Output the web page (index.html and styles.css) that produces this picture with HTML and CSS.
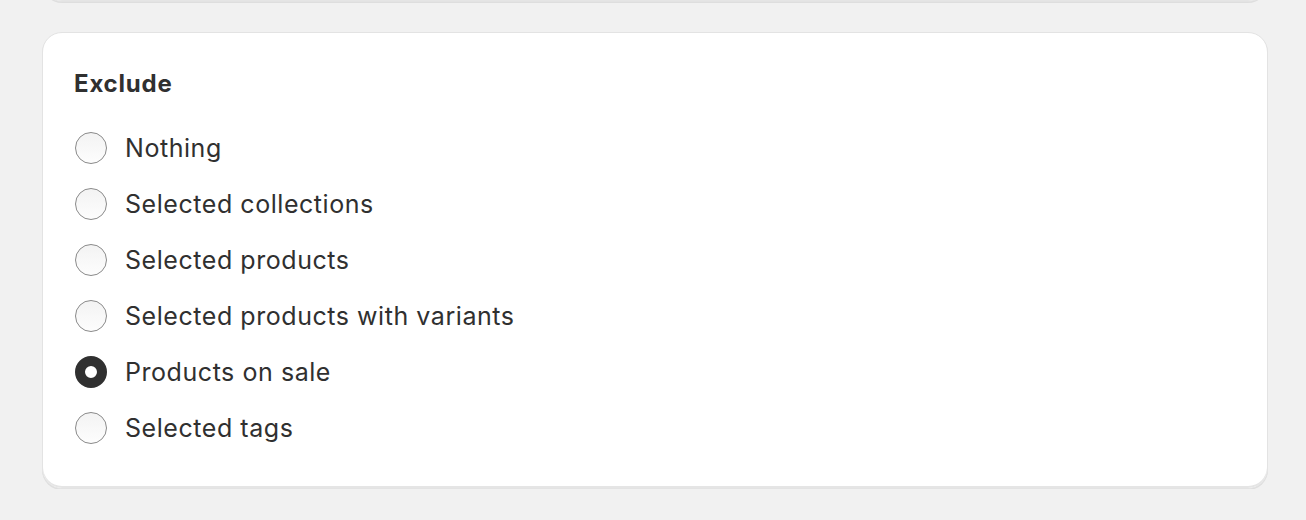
FILE: index.html
```html
<!DOCTYPE html>
<html lang="en">

<head>
  <meta charset="UTF-8">
  <meta name="viewport" content="width=device-width, initial-scale=1.0">
  <title>Discount exclusions</title>
  <link rel="stylesheet" href="styles.css">
</head>

<body>
  <div class="page">
    <!-- previous section, scrolled mostly out of view -->
    <div class="card card-prev"></div>

    <!-- Exclude section -->
    <div class="card">
      <h2 class="card-title">Exclude</h2>
      <div class="choice-list">
        <label class="choice">
          <input type="radio" name="exclude" value="nothing">
          <span class="radio"></span>
          <span class="choice-label">Nothing</span>
        </label>
        <label class="choice">
          <input type="radio" name="exclude" value="collections">
          <span class="radio"></span>
          <span class="choice-label">Selected collections</span>
        </label>
        <label class="choice">
          <input type="radio" name="exclude" value="products">
          <span class="radio"></span>
          <span class="choice-label">Selected products</span>
        </label>
        <label class="choice">
          <input type="radio" name="exclude" value="variants">
          <span class="radio"></span>
          <span class="choice-label">Selected products with variants</span>
        </label>
        <label class="choice">
          <input type="radio" name="exclude" value="sale" checked>
          <span class="radio"></span>
          <span class="choice-label">Products on sale</span>
        </label>
        <label class="choice">
          <input type="radio" name="exclude" value="tags">
          <span class="radio"></span>
          <span class="choice-label">Selected tags</span>
        </label>
      </div>
    </div>
  </div>
</body>

</html>
```

FILE: styles.css
```css
body {
  margin: 0;
  background: #f1f1f1;
  font-family: Inter, "Noto Sans", sans-serif;
  color: #303030;
}

.page {
  display: flex;
  flex-direction: column;
  gap: 30px;
  padding: 0 38px 0 42px;
}

.card {
  background: #fff;
  border: 1px solid #e3e3e3;
  border-radius: 20px;
  box-shadow: 0 1px 0 rgba(0, 0, 0, 0.08), inset 0 -2px 0 rgba(0, 0, 0, 0.1);
  padding: 35px 31px 32px;
}

.card-prev {
  height: 40px;
  padding: 0;
  margin-top: -40px;
}

.card-title {
  margin: 0 0 20px;
  font-size: 24px;
  font-weight: 700;
  line-height: 32px;
  letter-spacing: 0.8px;
}

.choice-list {
  display: flex;
  flex-direction: column;
}

.choice {
  display: flex;
  align-items: center;
  gap: 18px;
  height: 56px;
  cursor: pointer;
}

.choice input {
  display: none;
}

.radio {
  box-sizing: border-box;
  width: 32px;
  height: 32px;
  margin-left: 1px;
  border: 1.5px solid #8a8a8a;
  border-radius: 50%;
  background: linear-gradient(180deg, #f3f3f3, #fdfdfd);
}

.choice input:checked + .radio {
  border: 10px solid #303030;
  background: #fff;
}

.choice-label {
  font-size: 25px;
  letter-spacing: 0.55px;
}
```
